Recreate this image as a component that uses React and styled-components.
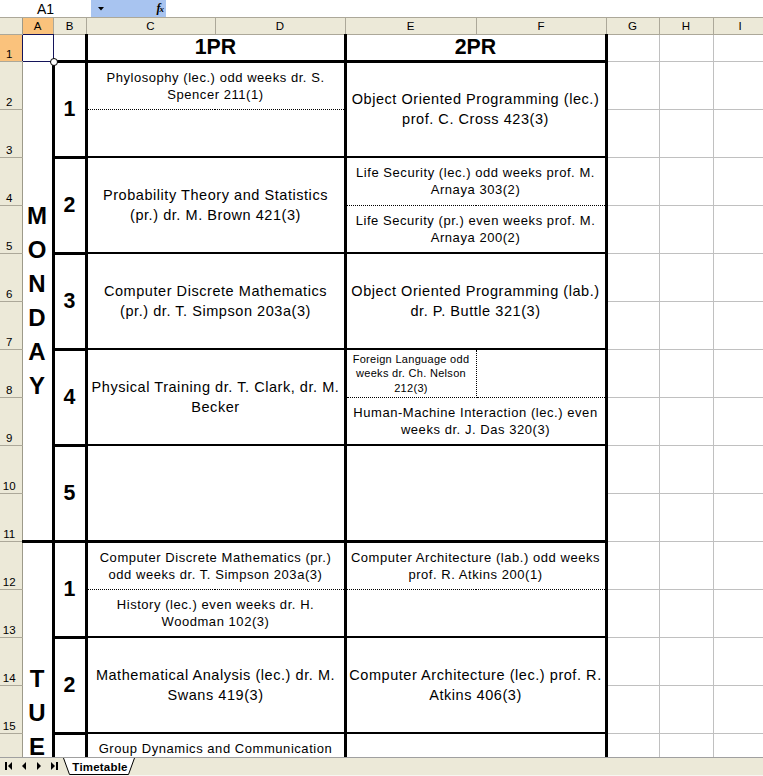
import React from 'react';
import styled, { createGlobalStyle } from 'styled-components';

const GlobalStyle = createGlobalStyle`
    html, body {
        margin: 0;
        padding: 0;
        background: #fff;
    }
    body {
        font-family: "Liberation Sans", Arial, sans-serif;
        color: #000;
    }
`;

const THICK = '3px solid #000';
const MED = '2px solid #000';
const DOT = '1px dotted #000';
const NAVY = '#14145a';

// Excel's hinted Arial runs wider than Liberation Sans, hence the letter spacing
const fonts = {
    xs: { size: '11px', lh: '14.5px', ls: '0.3px' },
    s: { size: '13px', lh: '17px', ls: '0.55px' },
    m: { size: '14.5px', lh: '20px', ls: '0.55px' },
};

const Window = styled.div`
    width: 763px;
    height: 776px;
    display: flex;
    flex-direction: column;
    overflow: hidden;
    background: #fff;
`;

const FormulaBar = styled.div`
    height: 17px;
    display: flex;
    border-bottom: 1px solid #aca899;
    background: #fff;
`;

const NameBox = styled.div`
    width: 91px;
    display: flex;
    align-items: center;
    justify-content: center;
    font-size: 14px;
`;

const FormulaButtons = styled.div`
    width: 75px;
    background: #a8c4f0;
    display: flex;
    align-items: center;
    justify-content: space-between;
    padding: 0 3px 0 7px;
    box-sizing: border-box;
`;

const Fx = styled.span`
    font-family: "Liberation Serif", serif;
    font-style: italic;
    font-weight: bold;
    font-size: 12px;
    letter-spacing: -1px;

    small {
        font-size: 9px;
    }
`;

const SheetArea = styled.div`
    flex: 1;
    overflow: hidden;
`;

const Sheet = styled.table`
    border-collapse: collapse;
    table-layout: fixed;
    width: 767px;
`;

const Col = styled.col`
    width: ${({ $w }) => $w}px;
`;

const Row = styled.tr`
    height: ${({ $h }) => $h}px;
`;

const Corner = styled.th`
    padding: 0;
    background: #ece9d8;
    border-right: 1px solid #9d9a8a;
    border-bottom: 1px solid #aca899;
`;

const ColHead = styled.th`
    padding: 0;
    font-weight: normal;
    font-size: 11.5px;
    text-align: center;
    vertical-align: middle;
    background: ${({ $active }) => ($active ? '#fac27c' : '#ece9d8')};
    border-left: 1px solid #aca899;
    border-right: 1px solid #aca899;
    border-bottom: 1px solid ${({ $active }) => ($active ? NAVY : '#aca899')};
`;

const RowHead = styled.th`
    padding: 0 3px 1px 0;
    font-weight: normal;
    font-size: 11.5px;
    text-align: center;
    vertical-align: bottom;
    background: ${({ $active }) => ($active ? '#fac27c' : '#ece9d8')};
    border-right: 1px solid ${({ $active }) => ($active ? NAVY : '#9d9a8a')};
    border-bottom: 1px solid #aca899;
`;

const Blank = styled.td`
    padding: 0;
    border: 1px solid #c0c0c0;
`;

const SelCell = styled.td`
    position: relative;
    padding: 0;
    border: 1px solid ${NAVY};
`;

const FillHandle = styled.span`
    position: absolute;
    right: -5px;
    bottom: -5px;
    width: 6px;
    height: 6px;
    border-radius: 50%;
    border: 1px solid #000;
    background: #fff;
    z-index: 2;
`;

const Cell = styled.td`
    padding: 0 2px;
    text-align: center;
    vertical-align: middle;
    white-space: nowrap;
    overflow: hidden;
    font-size: ${({ $size }) => fonts[$size || 's'].size};
    line-height: ${({ $size }) => fonts[$size || 's'].lh};
    letter-spacing: ${({ $size }) => fonts[$size || 's'].ls};
    border-top: ${({ $top }) => $top || 'none'};
    border-bottom: ${({ $bottom }) => $bottom || 'none'};
    border-left: ${({ $left }) => $left || 'none'};
    border-right: ${({ $right }) => $right || 'none'};
`;

const TitleCell = styled(Cell)`
    font-size: 21.33px;
    line-height: 24px;
    font-weight: bold;
    letter-spacing: 0;
`;

const NumCell = styled.td`
    padding: 0;
    text-align: center;
    vertical-align: middle;
    font-size: 21.33px;
    font-weight: bold;
    border: ${THICK};
`;

const DayCell = styled.td`
    padding: 0;
    vertical-align: middle;
    border-top: ${({ $top }) => $top || 'none'};
    border-bottom: ${THICK};
    border-right: ${THICK};
`;

const DayLetters = styled.div`
    display: flex;
    flex-direction: column;
    align-items: center;
    font-size: 24px;
    line-height: 34px;
    font-weight: bold;
`;

const TabBar = styled.div`
    height: 17px;
    display: flex;
    align-items: flex-start;
    background: #ece9d8;
    border-top: 1px solid #a0a0a0;
    border-bottom: 1px solid #f7f6f1;
`;

const NavButtons = styled.div`
    width: 63px;
    height: 16px;
    display: flex;
    align-items: center;
    justify-content: space-around;
    padding: 0 2px;
    box-sizing: border-box;
`;

const Tab = styled.div`
    position: relative;
    width: 72px;
    height: 17px;
    display: flex;
    align-items: center;
    justify-content: center;
    font-size: 11.5px;
    font-weight: bold;
    letter-spacing: 0.2px;

    svg {
        position: absolute;
        inset: 0;
    }

    span {
        position: relative;
        padding-left: 2px;
    }
`;

const days = [
    {
        name: 'MONDAY',
        slots: [
            {
                left: {
                    top: { text: ['Phylosophy (lec.) odd weeks dr. S.', 'Spencer 211(1)'] },
                    bottom: {},
                },
                right: { text: ['Object Oriented Programming (lec.)', 'prof. C. Cross 423(3)'], size: 'm' },
            },
            {
                left: { text: ['Probability Theory and Statistics', '(pr.) dr. M. Brown 421(3)'], size: 'm' },
                right: {
                    top: { text: ['Life Security (lec.) odd weeks prof. M.', 'Arnaya 303(2)'] },
                    bottom: { text: ['Life Security (pr.) even weeks prof. M.', 'Arnaya 200(2)'] },
                },
            },
            {
                left: { text: ['Computer Discrete Mathematics', '(pr.) dr. T. Simpson 203a(3)'], size: 'm' },
                right: { text: ['Object Oriented Programming (lab.)', 'dr. P. Buttle 321(3)'], size: 'm' },
            },
            {
                left: { text: ['Physical Training dr. T. Clark, dr. M.', 'Becker'], size: 'm' },
                right: {
                    top: {
                        cells: [
                            { text: ['Foreign Language odd', 'weeks dr. Ch. Nelson', '212(3)'], size: 'xs' },
                            {},
                        ],
                    },
                    bottom: { text: ['Human-Machine Interaction (lec.) even', 'weeks dr. J. Das 320(3)'] },
                },
            },
            { left: {}, right: {} },
        ],
    },
    {
        name: 'TUESDAY',
        slots: [
            {
                left: {
                    top: { text: ['Computer Discrete Mathematics (pr.)', 'odd weeks dr. T. Simpson 203a(3)'] },
                    bottom: { text: ['History (lec.) even weeks dr. H.', 'Woodman 102(3)'] },
                },
                right: {
                    top: { text: ['Computer Architecture (lab.) odd weeks', 'prof. R. Atkins 200(1)'] },
                    bottom: {},
                },
            },
            {
                left: { text: ['Mathematical Analysis (lec.) dr. M.', 'Swans 419(3)'], size: 'm' },
                right: { text: ['Computer Architecture (lec.) prof. R.', 'Atkins 406(3)'], size: 'm' },
            },
            {
                left: {
                    // second line runs under the sheet tabs, keep it as an empty line
                    top: { text: ['Group Dynamics and Communication', '\u00a0'] },
                    bottom: {},
                },
                right: {},
            },
            { left: {}, right: {} },
            { left: {}, right: {} },
        ],
    },
];

const columns = [22, 31, 33, 129, 130, 131, 130, 53, 54, 54];
const letters = ['A', 'B', 'C', 'D', 'E', 'F', 'G', 'H', 'I'];

function Lines({ text = [] }) {
    return text.map((line, i) => (
        <React.Fragment key={i}>
            {i > 0 && <br />}
            {line}
        </React.Fragment>
    ));
}

function Blanks() {
    return (
        <>
            <Blank />
            <Blank />
            <Blank />
        </>
    );
}

function sideCells(side, row, edge, key) {
    if (!side.top) {
        if (row === 1) return [];
        return [
            <Cell
                key={key}
                colSpan={2}
                rowSpan={2}
                $size={side.size}
                $top={edge.top}
                $bottom={edge.bottom}
                $left={THICK}
                $right={THICK}
            >
                <Lines text={side.text} />
            </Cell>,
        ];
    }
    const half = row === 0 ? side.top : side.bottom;
    const top = row === 0 ? edge.top : DOT;
    const bottom = row === 0 ? DOT : edge.bottom;
    if (half.cells) {
        return half.cells.map((c, i) => (
            <Cell
                key={`${key}-${i}`}
                $size={c.size}
                $top={top}
                $bottom={bottom}
                $left={i === 0 ? THICK : DOT}
                $right={i === half.cells.length - 1 ? THICK : DOT}
            >
                <Lines text={c.text} />
            </Cell>
        ));
    }
    return [
        <Cell key={key} colSpan={2} $size={half.size} $top={top} $bottom={bottom} $left={THICK} $right={THICK}>
            <Lines text={half.text} />
        </Cell>,
    ];
}

function DayRows({ day, first, startRow }) {
    const rows = [];
    day.slots.forEach((slot, s) => {
        const edge = {
            top: s === 0 ? THICK : MED,
            bottom: s === day.slots.length - 1 ? THICK : MED,
        };
        [0, 1].forEach((r) => {
            const num = startRow + s * 2 + r;
            rows.push(
                <Row key={num} $h={48}>
                    <RowHead>{num}</RowHead>
                    {s === 0 && r === 0 && (
                        <DayCell rowSpan={day.slots.length * 2} $top={first ? 'none' : THICK}>
                            <DayLetters>
                                {day.name.split('').map((l, i) => (
                                    <span key={i}>{l}</span>
                                ))}
                            </DayLetters>
                        </DayCell>
                    )}
                    {r === 0 && <NumCell rowSpan={2}>{s + 1}</NumCell>}
                    {sideCells(slot.left, r, edge, 'l')}
                    {sideCells(slot.right, r, edge, 'r')}
                    <Blanks />
                </Row>
            );
        });
    });
    return rows;
}

function NavIcon({ dir, bar }) {
    const left = dir === 'left';
    return (
        <svg width="8" height="8" viewBox="0 0 8 8">
            {bar && <rect x={left ? 0 : 6} y="0" width="2" height="8" fill="#000" />}
            <polygon
                points={left ? '6,0 6,8 2,4' : '2,0 2,8 6,4'}
                fill="#000"
                transform={bar ? `translate(${left ? 1 : -1} 0)` : ''}
            />
        </svg>
    );
}

export default function App() {
    return (
        <>
            <GlobalStyle />
            <Window>
                <FormulaBar>
                    <NameBox>A1</NameBox>
                    <FormulaButtons>
                        <svg width="6" height="4" viewBox="0 0 6 4">
                            <polygon points="0,0 6,0 3,3.5" fill="#000" />
                        </svg>
                        <Fx>
                            f<small>x</small>
                        </Fx>
                    </FormulaButtons>
                </FormulaBar>
                <SheetArea>
                    <Sheet>
                        <colgroup>
                            {columns.map((w, i) => (
                                <Col key={i} $w={w} />
                            ))}
                        </colgroup>
                        <tbody>
                            <Row $h={16}>
                                <Corner />
                                {letters.map((l) => (
                                    <ColHead key={l} $active={l === 'A'}>
                                        {l}
                                    </ColHead>
                                ))}
                            </Row>
                            <Row $h={27}>
                                <RowHead $active>1</RowHead>
                                <SelCell>
                                    <FillHandle />
                                </SelCell>
                                <Cell />
                                <TitleCell colSpan={2} $left={THICK} $right={THICK} $bottom={THICK}>
                                    1PR
                                </TitleCell>
                                <TitleCell colSpan={2} $left={THICK} $right={THICK} $bottom={THICK}>
                                    2PR
                                </TitleCell>
                                <Blanks />
                            </Row>
                            <DayRows day={days[0]} first startRow={2} />
                            <DayRows day={days[1]} startRow={12} />
                        </tbody>
                    </Sheet>
                </SheetArea>
                <TabBar>
                    <NavButtons>
                        <NavIcon dir="left" bar />
                        <NavIcon dir="left" />
                        <NavIcon dir="right" />
                        <NavIcon dir="right" bar />
                    </NavButtons>
                    <Tab>
                        <svg width="72" height="17" viewBox="0 0 72 17">
                            <path d="M0.5,0 L6.5,16.5 L65.5,16.5 L71.5,0" fill="#fff" stroke="#000" />
                        </svg>
                        <span>Timetable</span>
                    </Tab>
                </TabBar>
            </Window>
        </>
    );
}
